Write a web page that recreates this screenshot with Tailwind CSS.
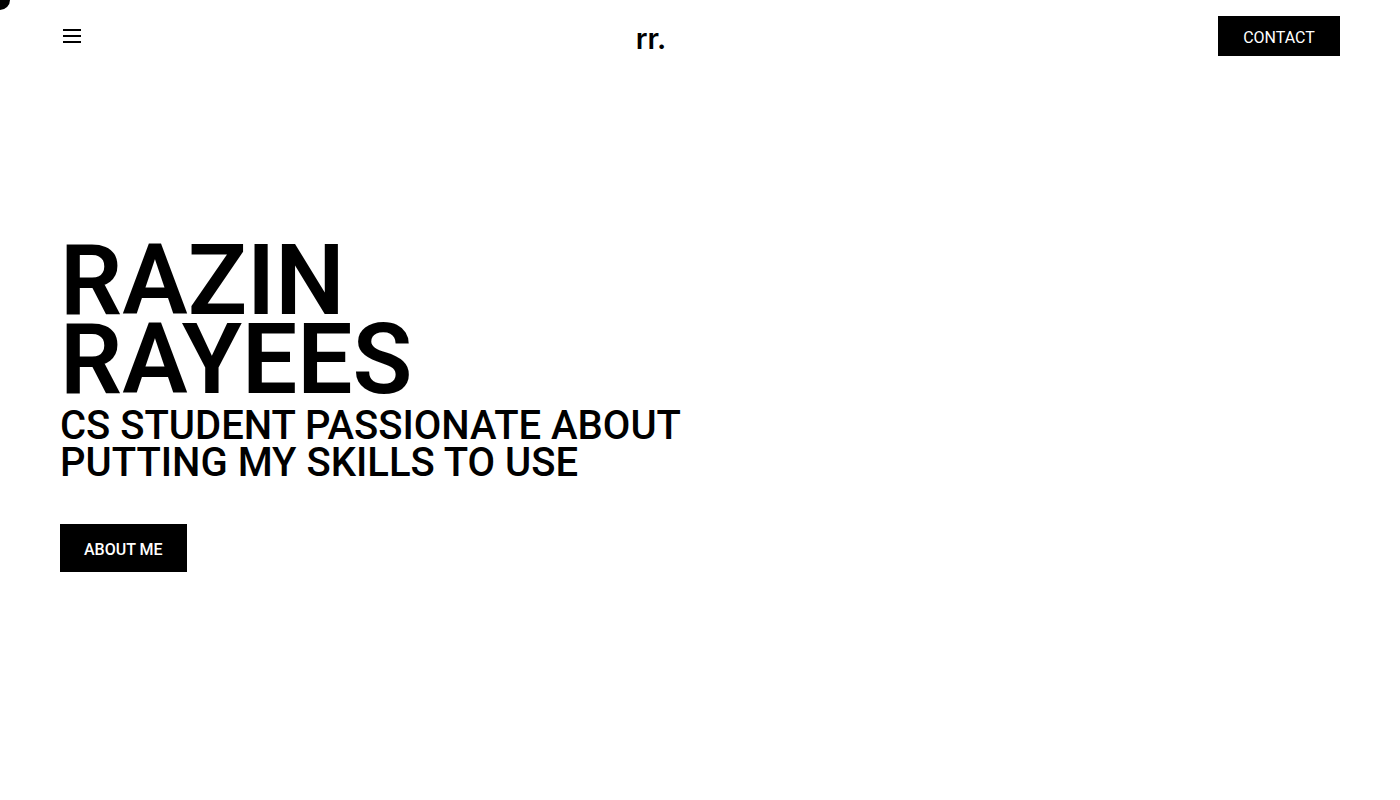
<!DOCTYPE html>
<html lang="en">
<head>
<meta charset="utf-8">
<meta name="viewport" content="width=device-width, initial-scale=1">
<title>Razin Rayees</title>
<script src="https://cdn.jsdelivr.net/npm/@tailwindcss/browser@4"></script>
</head>
<body class="min-h-screen overflow-x-hidden bg-white font-['Roboto',sans-serif] text-black">
<div class="pointer-events-none absolute -top-2.5 -left-2.5 size-5 rounded-full bg-black"></div>
<header class="flex h-18 items-center justify-between px-15">
  <button type="button" aria-label="Open menu" class="size-6">
    <svg viewBox="0 0 24 24" class="size-6" fill="currentColor"><path d="M3 5h18v2H3zM3 11h18v2H3zM3 17h18v2H3z"/></svg>
  </button>
  <a href="#" class="pt-1.5 font-['Inter',sans-serif] text-[29px] leading-10 font-semibold">rr.</a>
  <a href="#contact" class="flex h-10 min-w-[122px] items-center justify-center bg-black px-6 pt-1 text-base text-white">CONTACT</a>
</header>
<main class="px-15 pt-[169px]">
  <h1 class="text-[98px] leading-[79px] font-semibold">RAZIN<br>RAYEES</h1>
  <p class="pt-2 text-[40px] leading-[37px] font-medium">CS STUDENT PASSIONATE ABOUT<br>PUTTING MY SKILLS TO USE</p>
  <a href="#about" class="mt-[43px] inline-flex h-12 items-center bg-black px-6 pt-1 text-base font-medium text-white">ABOUT ME</a>
</main>
</body>
</html>
